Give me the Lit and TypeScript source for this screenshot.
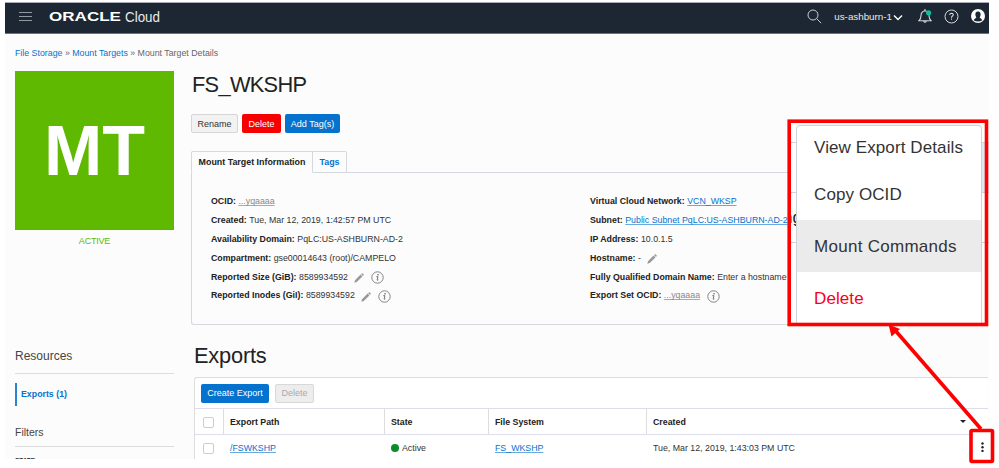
import { LitElement, html, css } from "lit";
import { customElement } from "lit/decorators.js";

const pencil = html`<svg class="pencil" viewBox="0 0 10 10"><path d="M.3 9.7 1 7.2 6.6 1.6 8.4 3.4 2.8 9z M7.1 1.1 7.8.4Q8.3 0 8.8.4L9.6 1.2Q10 1.7 9.6 2.2L8.900 2.900z" fill="#999"/></svg>`;
const info = html`<svg class="info" viewBox="0 0 13 13"><circle cx="6.5" cy="6.5" r="5.7" fill="none" stroke="#777" stroke-width=".9"/><circle cx="7" cy="3.7" r=".8" fill="#666"/><path d="M5.3 5.7H7L6.1 9.1Q6.2 9.6 7.4 8.9" fill="none" stroke="#666" stroke-width=".9"/></svg>`;

@customElement("app-root")
export class AppRoot extends LitElement {
  static styles = css`
    :host { display: block; position: relative; width: 999px; height: 468px; overflow: hidden; background: #fff; font: 8.8px/19px "Liberation Sans", Arial, sans-serif; color: #333; }
    * { box-sizing: border-box; }
    .frame { margin: 2px 0 0 5px; width: 984px; height: 457px; overflow: hidden; background: #fcfcfc; display: flex; flex-direction: column; }
    .top { display: flex; align-items: center; height: 32px; flex: none; padding-bottom: 4px; background: #1c2733; border-top: 1px solid #a9acb8; border-bottom: 1px solid #6d7080; }
    .burger { width: 13px; height: 11px; margin-left: 14px; margin-top: 1px; }
    .brand { width: 112px; height: 16px; margin-left: 17px; margin-top: 1px; }
    .grow { flex: 1; }
    .search { width: 15px; height: 15px; margin-right: 12px; }
    .region { color: #e8eaec; font-size: 9.8px; margin-right: 1px; white-space: nowrap; }
    .chev { width: 10px; height: 7px; margin-right: 15px; margin-top: 2px; }
    .bell { width: 14px; height: 16px; margin-right: 12px; }
    .help { width: 15px; height: 15px; margin-right: 12px; }
    .user { width: 14px; height: 14px; margin-right: 4px; }
    .crumbs { height: 37px; flex: none; padding: 10px 0 0 10px; color: #666; }
    .blue { color: #0572ce; }
    .body { display: flex; gap: 17px; padding-left: 10px; }
    .side { width: 159px; flex: none; }
    .tile { height: 159px; background: #5fb900; color: #fff; font-weight: bold; font-size: 70px; line-height: 160px; text-align: center; }
    .active { color: #5fb900; text-align: center; height: 22px; line-height: 23px; font-size: 9px; letter-spacing: -.2px; }
    .side h2 { margin: 93px 0 0; font-weight: normal; font-size: 12px; line-height: 23px; height: 29px; border-bottom: 1px solid #ddd; color: #444; }
    .nav { margin-top: 9px; height: 23px; border-left: 2px solid #2a83d2; padding-left: 4px; line-height: 23px; font-weight: bold; }
    .side h3 { margin: 15px 0 0; font-weight: normal; font-size: 10.5px; line-height: 22px; height: 26px; border-bottom: 1px solid #ddd; color: #444; }
    .state { font-weight: bold; font-size: 6.4px; line-height: 10px; padding-top: 9px; }
    .main { width: 797px; flex: none; white-space: nowrap; }
    .title { margin: 0 0 0 1px; font-weight: normal; font-size: 21.8px; letter-spacing: -.7px; line-height: 27px; height: 43px; color: #222; }
    .btns { display: flex; gap: 4px; }
    .btn { height: 19px; line-height: 20px; border-radius: 2px; text-align: center; color: #fff; font-size: 9px; }
    .rename { width: 47px; background: #f2f2f2; border: 1px solid #d6d6d6; color: #333; line-height: 18px; }
    .del { width: 39px; background: #f80000; }
    .add { width: 55px; background: #0572ce; }
    .tabs { display: flex; margin-top: 18px; height: 22px; }
    .tab { border: 1px solid #d5d8de; border-bottom-color: #fcfcfc; width: 122px; border-radius: 2px 0 0; font-weight: bold; color: #222; text-align: center; line-height: 21px; font-size: 8.9px; background: #fcfcfc; }
    .tab2 { width: 34px; border-left: 0; border-bottom-color: #d5d8de; color: #0572ce; border-radius: 0 2px 0 0; }
    .tabfill { flex: 1; border-bottom: 1px solid #d5d8de; }
    .panel { display: grid; grid-template-columns: 379px 1fr; height: 152px; padding: 19px 0 0 19px; border: 1px solid #d5d8de; border-top: 0; border-right: 0; border-radius: 0 0 0 3px; }
    .row { display: flex; align-items: center; height: 18.9px; }
    .row b { color: #222; margin-right: 2.5px; }
    .dots, .link { color: #888; text-decoration: underline #aaa 1px; text-underline-offset: 1px; text-decoration-skip-ink: none; }
    .link { color: #0572ce; text-decoration-color: #69aade; }
    .pencil { width: 10px; height: 10px; margin: 2px 0 0 6px; }
    .info { width: 13px; height: 13px; margin: 1px 0 0 7px; }
    .exports { margin: 18px 0 0 3px; font-weight: normal; font-size: 21.8px; letter-spacing: -.2px; line-height: 26px; height: 34px; color: #222; }
    .card { margin-left: 3px; border: 1px solid #ddd; border-right: 0; border-bottom: 0; border-radius: 3px 0 0; background: #fff; height: 84px; }
    .tools { display: flex; gap: 6px; padding: 6px 0 0 6px; height: 30px; }
    .create { width: 68px; background: #0572ce; line-height: 19px; }
    .off { width: 39px; background: #ededed; border: 1px solid #d8d8d8; color: #aaa; line-height: 17px; }
    .tr { display: grid; grid-template-columns: 28px 161px 104px 158px 1fr; height: 26px; border-top: 1px solid #dde; line-height: 26px; }
    .th { font-weight: bold; color: #222; }
    .td { padding-left: 6px; border-left: 1px solid transparent; display: flex; align-items: center; }
    .td:first-child { padding-left: 7px; }
    .th .td { border-left-color: #ddd; }
    .tr .td:first-child { border-left-color: transparent; }
    .box { width: 11px; height: 11px; border: 1px solid #ccc; border-radius: 2px; background: #fff; }
    .dot { width: 8px; height: 8px; border-radius: 50%; background: #0c8c2c; margin-right: 3px; }
    .caret { margin-left: auto; margin-right: 22px; margin-top: -2px; border: 3.5px solid transparent; border-top-color: #222; border-bottom: 0; }
    .inset { position: absolute; left: 788px; top: 119px; width: 201px; height: 206px; background: #fff; overflow: hidden; }
    .lines { position: absolute; inset: 23px 0 auto 0; height: 101px; border: solid #ccd3dc; border-width: 1px 0; background: linear-gradient(#ccd3dc, #ccd3dc) 0 49px / 100% 1px no-repeat, linear-gradient(#dbe9f7, #dbe9f7) 100% 0 / 20px 49px no-repeat; }
    .frag { position: absolute; left: -5px; top: 89px; font-size: 17px; line-height: 20px; color: #222; }
    .menu { position: absolute; left: 8px; top: 6px; width: 186px; height: 198px; overflow: hidden; border: 1px solid #ccd3dc; border-bottom: 0; border-radius: 4px 4px 0 0; background: #fff; font-size: 17px; letter-spacing: .1px; color: #333; white-space: nowrap; }
    .item { padding-left: 17px; height: 52px; line-height: 53px; }
    .first { height: 44px; line-height: 43px; }
    .second { height: 50px; line-height: 49px; }
    .sel { background: #ebebeb; line-height: 54px; letter-spacing: .28px; }
    .red { color: #f5001d; }
    .marks { position: absolute; left: 0; top: 0; width: 999px; height: 468px; }
  `;

  render() {
    return html`
      <div class="frame">
        <div class="top">
          <svg class="burger" viewBox="0 0 13 11"><path d="M0 1.5H13M0 5.5H13M0 9.5H13" stroke="#9199a1"/></svg>
          <svg class="brand" viewBox="0 0 112 16"><text x="0" y="12" textLength="72" lengthAdjust="spacingAndGlyphs" font-family="Liberation Sans, sans-serif" font-weight="bold" font-size="12" fill="#fff">ORACLE</text><text x="76" y="12.500" textLength="35" lengthAdjust="spacingAndGlyphs" font-family="Liberation Sans, sans-serif" font-size="14" fill="#e8eaec">Cloud</text></svg>
          <span class="grow"></span>
          <svg class="search" viewBox="0 0 15 15"><circle cx="6" cy="6" r="5" fill="none" stroke="#c8ccd0"/><path d="M9.6 9.6 14.2 14.2" stroke="#c8ccd0"/></svg>
          <span class="region">us-ashburn-1</span>
          <svg class="chev" viewBox="0 0 10 7"><path d="M1 1.5 5 5.5 9 1.5" fill="none" stroke="#fff" stroke-width="1.4"/></svg>
          <svg class="bell" viewBox="0 0 14 16"><path d="M1 12.7Q3 11 3 7.5 3.1 3.5 7 2.7 10.9 3.5 11 7.5 11 11 13 12.7ZM5.5 13Q7 15.6 8.5 13M7 2.7V1" fill="none" stroke="#d5d8dc" stroke-width="1.1"/><circle cx="10.6" cy="4.8" r="2.6" fill="#08c09a"/></svg>
          <svg class="help" viewBox="0 0 15 15"><circle cx="7.5" cy="7.5" r="6.5" fill="none" stroke="#d5d8dc"/><path d="M5.7 6Q5.8 4.3 7.5 4.3 9.3 4.4 9.2 5.9 9.1 6.7 8.2 7.2 7.5 7.7 7.5 8.7M7.5 9.6V10.8" fill="none" stroke="#d5d8dc" stroke-width="1.1"/></svg>
          <svg class="user" viewBox="0 0 14 14"><circle cx="7" cy="7" r="7" fill="#fff"/><path d="M7 2.5C9 2.5 9.8 4 9.6 5.8 9.5 7.4 8.8 8.2 8.6 8.6 8.8 9.6 11 9.6 11.2 11.4Q7 13.6 2.8 11.4C3 9.6 5.2 9.6 5.4 8.6 5.2 8.2 4.5 7.4 4.4 5.8 4.2 4 5 2.5 7 2.5Z" fill="#1c2733"/></svg>
        </div>
        <div class="crumbs"><span class="blue">File Storage</span> » <span class="blue">Mount Targets</span> » Mount Target Details</div>
        <div class="body">
          <div class="side">
            <div class="tile">MT</div>
            <div class="active">ACTIVE</div>
            <h2>Resources</h2>
            <div class="nav blue">Exports (1)</div>
            <h3>Filters</h3>
            <div class="state">STATE</div>
          </div>
          <div class="main">
            <h1 class="title">FS_WKSHP</h1>
            <div class="btns"><div class="btn rename">Rename</div><div class="btn del">Delete</div><div class="btn add">Add Tag(s)</div></div>
            <div class="tabs"><div class="tab">Mount Target Information</div><div class="tab tab2">Tags</div><div class="tabfill"></div></div>
            <div class="panel">
              <div>
                <div class="row"><b>OCID:</b><span class="dots">...yqaaaa</span></div>
                <div class="row"><b>Created:</b>Tue, Mar 12, 2019, 1:42:57 PM UTC</div>
                <div class="row"><b>Availability Domain:</b>PqLC:US-ASHBURN-AD-2</div>
                <div class="row"><b>Compartment:</b>gse00014643 (root)/CAMPELO</div>
                <div class="row"><b>Reported Size (GiB):</b>8589934592${pencil}${info}</div>
                <div class="row"><b>Reported Inodes (GiI):</b>8589934592${pencil}${info}</div>
              </div>
              <div>
                <div class="row"><b>Virtual Cloud Network:</b><span class="link">VCN_WKSP</span></div>
                <div class="row"><b>Subnet:</b><span class="link">Public Subnet PqLC:US-ASHBURN-AD-2</span></div>
                <div class="row"><b>IP Address:</b>10.0.1.5</div>
                <div class="row"><b>Hostname:</b>-${pencil}</div>
                <div class="row"><b>Fully Qualified Domain Name:</b>Enter a hostname</div>
                <div class="row"><b>Export Set OCID:</b><span class="dots">...yqaaaa</span>${info}</div>
              </div>
            </div>
            <h2 class="exports">Exports</h2>
            <div class="card">
              <div class="tools"><div class="btn create">Create Export</div><div class="btn off">Delete</div></div>
              <div class="tr th"><div class="td"><span class="box"></span></div><div class="td">Export Path</div><div class="td">State</div><div class="td">File System</div><div class="td">Created<span class="caret"></span></div></div>
              <div class="tr"><div class="td"><span class="box"></span></div><div class="td"><span class="link">/FSWKSHP</span></div><div class="td"><span class="dot"></span>Active</div><div class="td"><span class="link">FS_WKSHP</span></div><div class="td">Tue, Mar 12, 2019, 1:43:03 PM UTC</div></div>
            </div>
          </div>
        </div>
      </div>
      <div class="inset">
        <div class="lines"></div>
        <div class="frag">ng</div>
        <div class="menu"><div class="item first">View Export Details</div><div class="item second">Copy OCID</div><div class="item sel">Mount Commands</div><div class="item red">Delete</div></div>
      </div>
      <svg class="marks" viewBox="0 0 999 468">
        <rect x="789.2" y="121.2" width="197.300" height="203.300" fill="none" stroke="#f00" stroke-width="3.6"/>
        <path d="M981 429 894 329" stroke="#f00" stroke-width="3.6"/>
        <path d="M888.5 324.500 900 329 891.500 336.500Z" fill="#f00"/>
        <rect x="971" y="430.500" width="21.500" height="31" rx="1" fill="#fff" stroke="#f00" stroke-width="3.600"/>
        <circle cx="982.500" cy="443.500" r="1.200" fill="#222"/><circle cx="982.500" cy="447.200" r="1.200" fill="#222"/><circle cx="982.500" cy="450.900" r="1.200" fill="#222"/>
      </svg>
    `;
  }
}
